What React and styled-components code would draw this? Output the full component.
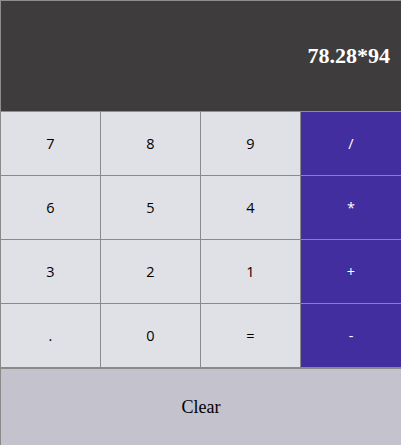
import React from "react";
import styled, { createGlobalStyle } from "styled-components";

const Global = createGlobalStyle`
  html, body { margin: 0; padding: 0; background: #ffffff; }
  body { font-family: "Liberation Serif", "Times New Roman", serif; }
`;

const Calculator = styled.div`
  width: 401px;
  display: flex;
  flex-direction: column;
`;

const Display = styled.div`
  box-sizing: border-box;
  height: 112px;
  border: 1px solid #8e8e8e;
  border-right: none;
  background: #3e3c3d;
  color: #ffffff;
  display: flex;
  align-items: center;
  justify-content: flex-end;
  padding-right: 11px;
  font-family: "Liberation Serif", "Times New Roman", serif;
  font-weight: bold;
  font-size: 22px;
`;

const Keys = styled.div`
  display: grid;
  grid-template-columns: 100px 100px 100px 101px;
  grid-auto-rows: 64px;
`;

const Key = styled.button`
  box-sizing: border-box;
  margin: 0;
  padding: 0;
  border: none;
  border-left: 1px solid #8a8a8a;
  border-bottom: 1px solid #8a8a8a;
  background: ${(p) => (p.$op ? "#432ea0" : "#e0e1e6")};
  color: ${(p) => (p.$op ? "#ffffff" : "#000000")};
  font-family: "Open Sans", "Segoe UI", sans-serif;
  font-size: 14.5px;
  display: flex;
  align-items: center;
  justify-content: center;
  cursor: pointer;
`;

const Clear = styled.button`
  box-sizing: border-box;
  margin: 0;
  padding: 0;
  height: 78px;
  border: none;
  border-top: 1px solid #8a8a8a;
  border-left: 1px solid #8a8a8a;
  background: #c4c2cd;
  color: #000000;
  font-family: "Liberation Serif", "Times New Roman", serif;
  font-size: 18px;
  display: flex;
  align-items: center;
  justify-content: center;
  cursor: pointer;
`;

const keys = [
  ["7", false], ["8", false], ["9", false], ["/", true],
  ["6", false], ["5", false], ["4", false], ["*", true],
  ["3", false], ["2", false], ["1", false], ["+", true],
  [".", false], ["0", false], ["=", false], ["-", true],
];

export default function App() {
  return (
    <>
      <Global />
      <Calculator>
        <Display>78.28*94</Display>
        <Keys>
          {keys.map(([k, op]) => (
            <Key key={k} $op={op}>{k}</Key>
          ))}
        </Keys>
        <Clear>Clear</Clear>
      </Calculator>
    </>
  );
}
